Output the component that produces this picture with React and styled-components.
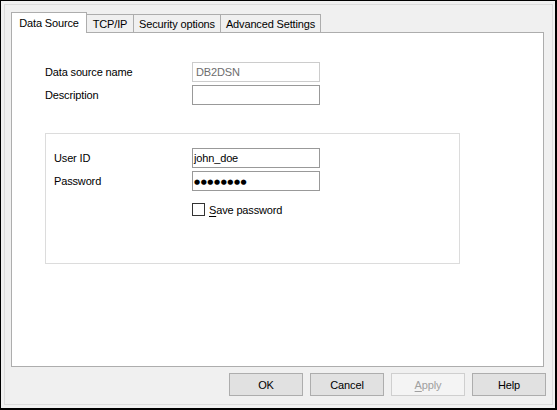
import React from "react";
import styled, { createGlobalStyle } from "styled-components";

const Global = createGlobalStyle`
  html, body { margin: 0; padding: 0; background: #f0f0f0; }
  body { font-family: "Liberation Sans", Arial, sans-serif; font-size: 11px; color: #000; }
  * { box-sizing: border-box; }
`;

const Window = styled.div`
  width: 557px;
  height: 410px;
  background: #f0f0f0;
  border-style: solid;
  border-color: #000;
  border-width: 1px 2px 2px 1px;
  padding: 3px 2px 3px 3px;
  display: flex;
`;

const Inner = styled.div`
  flex: 1;
  border: 1px solid #dcdcdc;
  padding: 7px 6px 8px 6px;
  display: flex;
  flex-direction: column;
`;

const TabStrip = styled.div`
  display: flex;
  align-items: flex-end;
  height: 20px;
`;

const Tab = styled.div`
  position: relative;
  width: ${(p) => p.$w}px;
  height: ${(p) => (p.$active ? 21 : 18)}px;
  margin-bottom: ${(p) => (p.$active ? -1 : 0)}px;
  margin-left: ${(p) => (p.$first ? 0 : -1)}px;
  z-index: ${(p) => (p.$active ? 2 : 1)};
  background: ${(p) => (p.$active ? "#fff" : "#f0f0f0")};
  border: 1px solid #adadad;
  border-bottom: none;
  display: flex;
  align-items: center;
  justify-content: center;
  padding-top: ${(p) => (p.$active ? 0 : 1)}px;
  letter-spacing: -0.15px;
  white-space: nowrap;
`;

const Panel = styled.div`
  flex: 1;
  margin-right: 2px;
  background: #fff;
  border: 1px solid #adadad;
  padding: 29px 0 0 33px;
`;

const FormGrid = styled.div`
  display: grid;
  grid-template-columns: ${(p) => p.$label}px 128px;
  grid-auto-rows: 20px;
  row-gap: 3px;
  align-items: center;
`;

const Label = styled.span`
  letter-spacing: -0.15px;
  white-space: nowrap;
`;

const Field = styled.div`
  height: 20px;
  border: 1px solid ${(p) => (p.$disabled ? "#cccccc" : "#999999")};
  background: #fff;
  color: ${(p) => (p.$disabled ? "#6d6d6d" : "#000")};
  padding: 0 0 0 ${(p) => (p.$disabled ? 3 : 1)}px;
  display: flex;
  align-items: center;
  letter-spacing: -0.15px;
  white-space: nowrap;
  overflow: hidden;
`;

const Dots = styled.span`
  font-family: "DejaVu Sans", sans-serif;
  font-size: 7px;
  letter-spacing: 0.55px;
  padding-top: 1px;
`;

const GroupBox = styled.div`
  margin-top: 28px;
  width: 415px;
  height: 131px;
  border: 1px solid #dcdcdc;
  padding: 14px 0 0 8px;
`;

const CheckRow = styled.div`
  margin: 12px 0 0 138px;
  display: flex;
  align-items: center;
  gap: 4px;
  height: 13px;
`;

const CheckBox = styled.span`
  width: 13px;
  height: 13px;
  border: 1px solid #333;
  background: #fff;
  flex: none;
`;

const Mnemonic = styled.span`
  text-decoration: underline;
  text-underline-offset: 2px;
`;

const ButtonRow = styled.div`
  margin-top: 6px;
  display: flex;
  justify-content: flex-end;
  gap: 7px;
`;

const Button = styled.div`
  width: 74px;
  height: 23px;
  border: 1px solid ${(p) => (p.$disabled ? "#cfcfcf" : "#adadad")};
  background: ${(p) => (p.$disabled ? "#f4f4f4" : "#e1e1e1")};
  color: ${(p) => (p.$disabled ? "#a0a0a0" : "#000")};
  display: flex;
  align-items: center;
  justify-content: center;
  letter-spacing: -0.15px;
`;

const tabs = [
  { label: "Data Source", w: 76, active: true },
  { label: "TCP/IP", w: 48 },
  { label: "Security options", w: 88 },
  { label: "Advanced Settings", w: 101 },
];

export default function App() {
  return (
    <>
      <Global />
      <Window>
        <Inner>
          <TabStrip>
            {tabs.map((t, i) => (
              <Tab key={t.label} $w={t.w} $active={t.active} $first={i === 0}>
                {t.label}
              </Tab>
            ))}
          </TabStrip>
          <Panel>
            <FormGrid $label={147}>
              <Label>Data source name</Label>
              <Field $disabled>DB2DSN</Field>
              <Label>Description</Label>
              <Field />
            </FormGrid>
            <GroupBox>
              <FormGrid $label={138}>
                <Label>User ID</Label>
                <Field>john_doe</Field>
                <Label>Password</Label>
                <Field>
                  <Dots>●●●●●●●●</Dots>
                </Field>
              </FormGrid>
              <CheckRow>
                <CheckBox />
                <Label>
                  <Mnemonic>S</Mnemonic>ave password
                </Label>
              </CheckRow>
            </GroupBox>
          </Panel>
          <ButtonRow>
            <Button>OK</Button>
            <Button>Cancel</Button>
            <Button $disabled>
              <span>
                <Mnemonic>A</Mnemonic>pply
              </span>
            </Button>
            <Button>Help</Button>
          </ButtonRow>
        </Inner>
      </Window>
    </>
  );
}
